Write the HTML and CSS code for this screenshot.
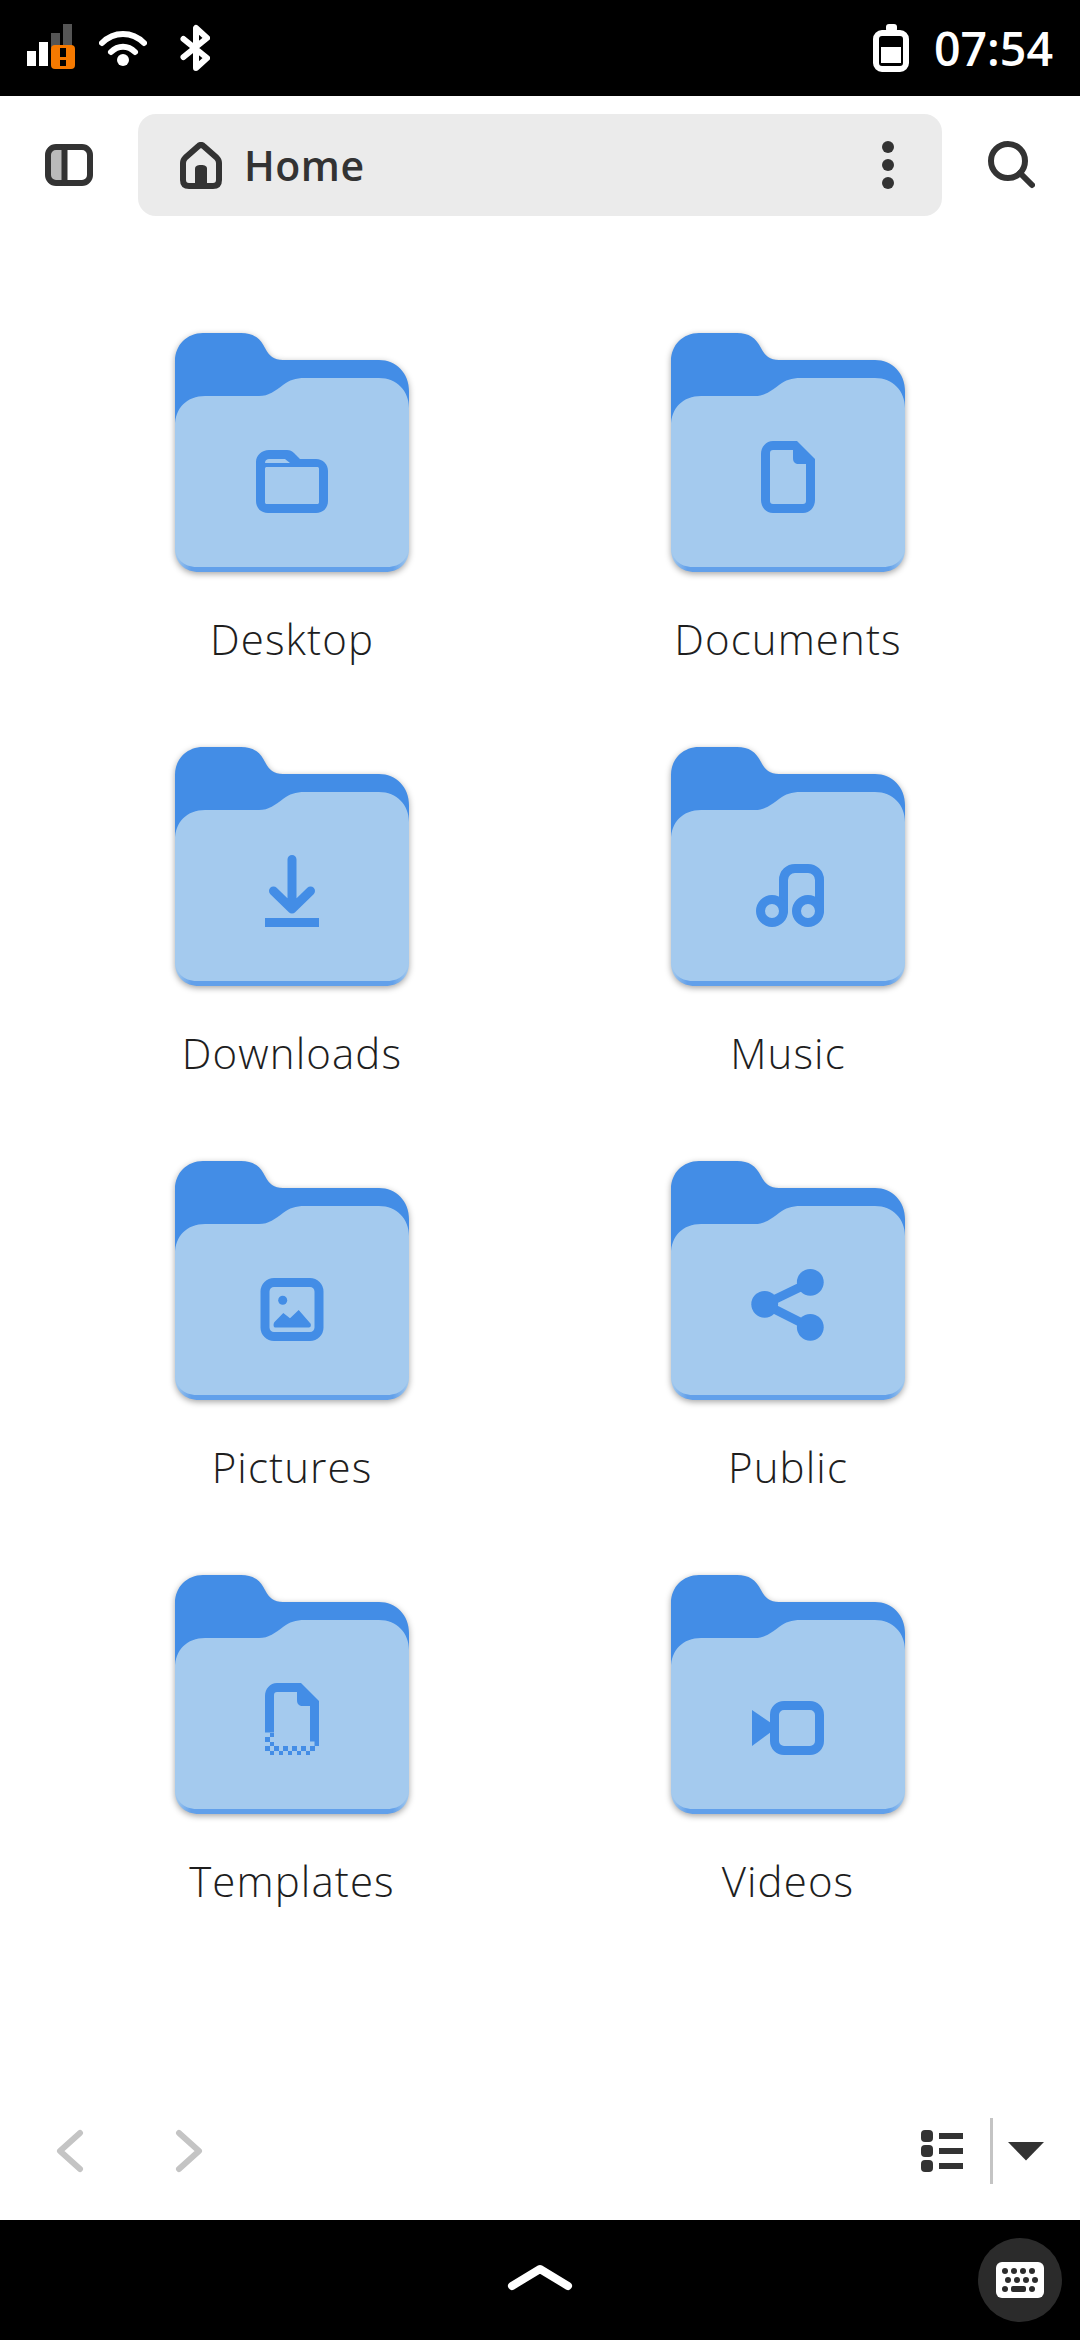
FILE: index.html
```html
<!DOCTYPE html>
<html>
<head>
  <title>Home - Files</title>
  <link rel="stylesheet" href="styles.css">
</head>
<body>
  <svg class="defs" width="0" height="0">
    <defs>
      <linearGradient id="folder-edge" x1="0" x2="1" y1="0" y2="0">
        <stop offset="0" stop-color="#a4caee"/>
        <stop offset="0.07" stop-color="#62a0ea"/>
        <stop offset="0.93" stop-color="#62a0ea"/>
        <stop offset="1" stop-color="#a4caee"/>
      </linearGradient>
      <symbol id="folder" viewBox="0 0 234 240">
        <path fill="url(#folder-edge)" d="M0 200 H234 V216 C234 230 224 239 210 239 H24 C10 239 0 230 0 216 Z"/>
        <path fill="#438de6" d="M28 0 H66 C78 0 85 5 90 15 C94 23 99 27 108 27 H204 C221 27 234 40 234 58 V120 H0 V28 C0 12 12 0 28 0 Z"/>
        <path fill="#a4caee" d="M0 93 C0 75 12 63 30 63 H84 C94 63 100 58 108 52 C115 47 120 45 130 45 H204 C222 45 234 58 234 75 V212 C234 225 226 234 212 234 H22 C8 234 0 225 0 212 Z"/>
      </symbol>
    </defs>
  </svg>

  <div class="statusbar">
    <div class="status-left">
      <svg class="sb-signal" width="48" height="48" viewBox="0 0 48 48">
        <rect class="w" x="0" y="27" width="9" height="15"/>
        <rect class="w" x="12" y="18" width="9" height="24"/>
        <rect class="dim" x="24" y="9" width="9" height="15"/>
        <rect class="dim" x="36" y="0" width="9" height="24"/>
        <rect class="warn" x="24" y="21" width="24" height="24" rx="4"/>
        <rect class="k" x="33" y="24" width="6" height="9"/>
        <rect class="k" x="33" y="36" width="6" height="6"/>
      </svg>
      <svg width="48" height="48" viewBox="0 0 48 48">
        <path class="w-line" d="M3 19 C15 7 33 7 45 19"/>
        <path class="w-line" d="M12 28 C19 21 29 21 36 28"/>
        <circle class="w" cx="24" cy="36" r="6"/>
      </svg>
      <svg class="sb-bt" width="30" height="48" viewBox="0 0 30 48">
        <path class="w-line" d="M3.500 33 L27 14 L16 4 V44 L27 34 L3.500 15"/>
      </svg>
    </div>
    <div class="status-right">
      <svg width="36" height="48" viewBox="0 0 36 48">
        <rect class="w" x="13" y="0" width="11" height="8" rx="3"/>
        <rect class="w-line" x="3" y="9" width="30" height="36" rx="6"/>
        <rect class="w" x="8" y="23" width="20" height="16"/>
      </svg>
      <span class="clock">07:54</span>
    </div>
  </div>

  <header class="headerbar">
    <svg class="hb-sidebar" width="48" height="42" viewBox="0 0 48 42">
      <rect class="grey" x="3" y="3" width="17" height="36"/>
      <rect class="d-line" x="3" y="3" width="42" height="36" rx="8"/>
      <path class="d-line" d="M19.500 3 V39"/>
    </svg>
    <div class="pathbar">
      <svg width="42" height="47" viewBox="0 0 42 47">
        <path class="d-line" d="M3 21 C3 18.500 4 17 5.500 15.500 L18 4.500 C20 2.500 22 2.500 24 4.500 L36.500 15.500 C38 17 39 18.500 39 21 V38 C39 42 37 44 33 44 H9 C5 44 3 42 3 38 Z"/>
        <path class="d" d="M15 45 V27 C15 24 17 23 21 23 C25 23 27 24 27 27 V45 Z"/>
      </svg>
      <span class="path-name">Home</span>
      <span class="path-dots"><i></i><i></i><i></i></span>
    </div>
    <svg class="hb-search" width="48" height="48" viewBox="0 0 48 48">
      <circle class="d-line" cx="21" cy="20" r="17"/>
      <path class="d-line" d="M33 32 L45 44"/>
    </svg>
  </header>

  <main class="grid">
    <div class="item">
      <svg class="folder" width="234" height="240" viewBox="0 0 234 240">
        <use href="#folder"/>
        <path class="glyph" fill-rule="evenodd" d="M94 117 H112 C115 117 117 118 119 120 L125 126 H141 C148 126 153 131 153 138 V168 C153 175 148 180 141 180 H93 C86 180 81 175 81 168 V129 C81 122 87 117 94 117 Z M92 134 H142 C143.500 134 144 134.500 144 136 V169 C144 170.500 143.500 171 142 171 H92 C90.500 171 90 170.500 90 169 V136 C90 134.500 90.500 134 92 134 Z M90 130 C90 127 92 126 94 126 H110 L115 130 Z"/>
      </svg>
      <span class="name">Desktop</span>
    </div>
    <div class="item">
      <svg class="folder" width="234" height="240" viewBox="0 0 234 240">
        <use href="#folder"/>
        <path class="glyph" fill-rule="evenodd" d="M102 108 H126 L144 126 V167 C144 174 139 180 132 180 H102 C95 180 90 174 90 167 V121 C90 114 95 108 102 108 Z M102 117 C100 117 99 118 99 120 V168 C99 170 100 171 102 171 H132 C134 171 135 170 135 168 V131 H128 C124 131 122 129 122 125 V117 Z"/>
      </svg>
      <span class="name">Documents</span>
    </div>
    <div class="item">
      <svg class="folder" width="234" height="240" viewBox="0 0 234 240">
        <use href="#folder"/>
        <path class="glyph-line" d="M117 112.500 V162 M98.500 144 L117 162 L135.500 144"/>
        <rect class="glyph" x="90" y="171" width="54" height="9"/>
      </svg>
      <span class="name">Downloads</span>
    </div>
    <div class="item">
      <svg class="folder" width="234" height="240" viewBox="0 0 234 240">
        <use href="#folder"/>
        <path class="glyph-line" d="M112.500 164 V133 C112.500 126 118 121.500 124 121.500 H137 C143 121.500 148.500 126 148.500 133 V164"/>
        <circle class="glyph-line" cx="101" cy="164" r="11.500"/>
        <circle class="glyph-line" cx="137" cy="164" r="11.500"/>
      </svg>
      <span class="name">Music</span>
    </div>
    <div class="item">
      <svg class="folder" width="234" height="240" viewBox="0 0 234 240">
        <use href="#folder"/>
        <rect class="glyph-line" x="90" y="121.500" width="54" height="54" rx="9"/>
        <circle class="glyph" cx="107.700" cy="139.300" r="4.500"/>
        <path class="glyph" d="M100 166.500 H134 C136 166.500 136.500 163.500 135 162 L123.700 149 L115 157.300 L108.300 152 L99.500 161 C98 163 98.500 166.500 100 166.500 Z"/>
      </svg>
      <span class="name">Pictures</span>
    </div>
    <div class="item">
      <svg class="folder" width="234" height="240" viewBox="0 0 234 240">
        <use href="#folder"/>
        <path class="glyph-line" d="M139.300 121.300 L93.700 143.300 L139.300 166.300"/>
        <circle class="glyph" cx="93.700" cy="143.300" r="13.400"/>
        <circle class="glyph" cx="139.300" cy="121.300" r="13.400"/>
        <circle class="glyph" cx="139.300" cy="166.300" r="13.400"/>
      </svg>
      <span class="name">Public</span>
    </div>
    <div class="item">
      <svg class="folder" width="234" height="240" viewBox="0 0 234 240">
        <use href="#folder"/>
        <path class="glyph" d="M102 108 H126 L144 126 V171 H139.500 V166.500 H135 V131 H128 C124 131 122 129 122 125 V117 H102 C100 117 99 118 99 120 V157.500 H90 V121 C90 114 95 108 102 108 Z"/>
        <g class="glyph checker">
          <rect x="94.500" y="157.500" width="4.500" height="4.500"/>
          <rect x="90" y="162" width="4.500" height="4.500"/>
          <rect x="94.500" y="166.500" width="4.500" height="4.500"/>
          <rect x="90" y="171" width="4.500" height="4.500"/>
          <rect x="99" y="171" width="4.500" height="4.500"/>
          <rect x="94.500" y="175.500" width="4.500" height="4.500"/>
          <rect x="108" y="171" width="4.500" height="4.500"/>
          <rect x="103.500" y="175.500" width="4.500" height="4.500"/>
          <rect x="117" y="171" width="4.500" height="4.500"/>
          <rect x="112.500" y="175.500" width="4.500" height="4.500"/>
          <rect x="126" y="171" width="4.500" height="4.500"/>
          <rect x="121.500" y="175.500" width="4.500" height="4.500"/>
          <rect x="135" y="171" width="4.500" height="4.500"/>
          <rect x="130.500" y="175.500" width="4.500" height="4.500"/>
        </g>
      </svg>
      <span class="name">Templates</span>
    </div>
    <div class="item">
      <svg class="folder" width="234" height="240" viewBox="0 0 234 240">
        <use href="#folder"/>
        <rect class="glyph-line" x="103.500" y="130.500" width="45" height="45" rx="9.500"/>
        <path class="glyph" d="M81 135 L100 148 V157 L81 171 Z"/>
      </svg>
      <span class="name">Videos</span>
    </div>
  </main>

  <div class="toolbar">
    <svg class="tb-back" width="28" height="44" viewBox="0 0 28 44">
      <path class="g-line" d="M24 4 L4 22 L24 40"/>
    </svg>
    <svg class="tb-forward" width="28" height="44" viewBox="0 0 28 44">
      <path class="g-line" d="M4 4 L24 22 L4 40"/>
    </svg>
    <div class="view-switch">
      <svg width="42" height="42" viewBox="0 0 42 42">
        <rect class="d" x="0" y="0" width="12" height="12" rx="4"/>
        <rect class="d" x="0" y="15" width="12" height="12" rx="4"/>
        <rect class="d" x="0" y="30" width="12" height="12" rx="4"/>
        <rect class="d" x="18" y="3" width="24" height="6"/>
        <rect class="d" x="18" y="18" width="24" height="6"/>
        <rect class="d" x="18" y="33" width="24" height="6"/>
      </svg>
      <span class="separator"></span>
      <svg width="36" height="19" viewBox="0 0 36 19">
        <path class="d" d="M0 0 H36 L18 18.500 Z"/>
      </svg>
    </div>
  </div>

  <div class="navbar">
    <svg class="nav-up" width="66" height="30" viewBox="0 0 66 30">
      <path class="w-line" d="M5 24 L33 7 L61 24"/>
    </svg>
    <div class="osk">
      <svg width="48" height="36" viewBox="0 0 48 36">
        <rect class="w" x="0" y="0" width="48" height="36" rx="6"/>
        <g class="osk-keys">
          <circle cx="9" cy="9" r="3"/><circle cx="18" cy="9" r="3"/><circle cx="27" cy="9" r="3"/><circle cx="36" cy="9" r="3"/>
          <circle cx="12" cy="18" r="3"/><circle cx="21" cy="18" r="3"/><circle cx="30" cy="18" r="3"/><circle cx="39" cy="18" r="3"/>
          <circle cx="9" cy="27" r="3"/><rect x="15" y="24" width="15" height="6" rx="2"/><circle cx="36" cy="27" r="3"/>
        </g>
      </svg>
    </div>
  </div>
</body>
</html>
```

FILE: styles.css
```css
* {
  box-sizing: border-box;
}

html, body {
  margin: 0;
  padding: 0;
}

body {
  width: 1080px;
  height: 2340px;
  display: flex;
  flex-direction: column;
  overflow: hidden;
  background-color: #fff;
  color: #2e2e2e;
  font-family: "Open Sans", "Noto Sans", sans-serif;
}

svg {
  display: block;
  flex: none;
}

.defs {
  height: 0;
}

/* svg paint classes */
.w { fill: #fff; }
.k { fill: #000; }
.d { fill: #333; }
.dim { fill: #555; }
.warn { fill: #f57900; }
.grey { fill: #bababa; }
.w-line, .d-line, .g-line, .glyph-line {
  fill: none;
  stroke-width: 6;
  stroke-linecap: round;
  stroke-linejoin: round;
}
.w-line { stroke: #fff; }
.d-line { stroke: #333; }
.g-line { stroke: #c4c4c4; }
.glyph { fill: #438de6; }
.glyph-line { stroke: #438de6; stroke-width: 9; }
.checker { shape-rendering: crispEdges; }

/* top status bar */
.statusbar {
  height: 96px;
  flex: none;
  background-color: #000;
  color: #fff;
  padding: 0 27px;
  display: flex;
  align-items: center;
  justify-content: space-between;
}

.status-left {
  display: flex;
  align-items: center;
  gap: 24px;
}

.sb-bt {
  margin-left: 9px;
}

.status-right {
  display: flex;
  align-items: center;
  gap: 25px;
}

.clock {
  font-size: 46.500px;
  font-weight: 600;
  line-height: 48px;
}

/* header */
.headerbar {
  height: 138px;
  flex: none;
  display: flex;
  align-items: center;
  padding: 0 45px;
}

.pathbar {
  width: 804px;
  height: 102px;
  margin-left: 45px;
  padding: 0 42px;
  background-color: #ebebeb;
  border-radius: 18px;
  display: flex;
  align-items: center;
}

.path-name {
  margin-left: 22px;
  font-size: 41px;
  font-weight: 600;
  letter-spacing: 0.5px;
  color: #333;
}

.path-dots {
  margin-left: auto;
  margin-right: 6px;
  display: flex;
  flex-direction: column;
  gap: 6px;
}

.path-dots i {
  display: block;
  width: 12px;
  height: 12px;
  border-radius: 50%;
  background-color: #333;
}

.hb-search {
  margin-left: 45px;
}

/* folder grid */
.grid {
  flex: 1;
  padding: 99px 44px 0;
  display: grid;
  grid-template-columns: 496px 496px;
  grid-auto-rows: 414px;
}

.item {
  display: flex;
  flex-direction: column;
  align-items: center;
}

.folder {
  filter: drop-shadow(0 2px 3px rgba(0, 0, 0, 0.35));
}

.name {
  margin-top: 38px;
  font-size: 42px;
  font-weight: 300;
  line-height: 56px;
  letter-spacing: 1.100px;
  color: #1e1e1e;
}

/* bottom toolbar */
.toolbar {
  height: 138px;
  flex: none;
  display: flex;
  align-items: center;
  padding: 0 36px 0 56px;
}

.tb-forward {
  margin-left: 91px;
}

.view-switch {
  margin-left: auto;
  display: flex;
  align-items: center;
}

.separator {
  display: block;
  width: 3px;
  height: 66px;
  margin: 0 15px 0 27px;
  background-color: #c4c4c4;
}

/* nav bar */
.navbar {
  height: 120px;
  flex: none;
  background-color: #000;
  display: flex;
  align-items: center;
  padding-left: 507px;
  padding-right: 18px;
}

.nav-up {
  margin-bottom: 6px;
}

.nav-up path {
  stroke-width: 8;
}

.osk {
  width: 84px;
  height: 84px;
  margin-left: auto;
  border-radius: 50%;
  background-color: #2b2b2b;
  display: flex;
  align-items: center;
  justify-content: center;
}

.osk-keys {
  fill: #2b2b2b;
}
```
